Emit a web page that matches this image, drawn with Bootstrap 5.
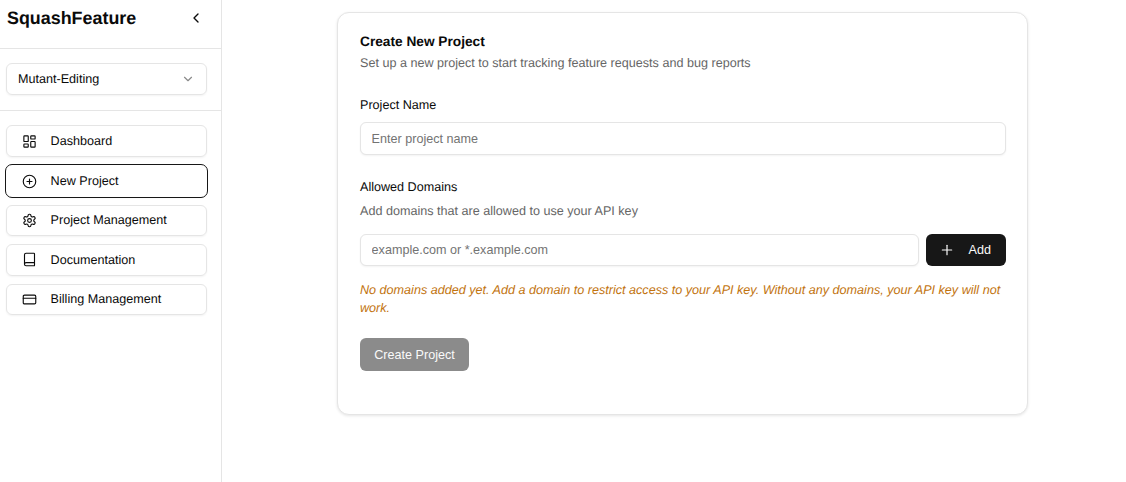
<!DOCTYPE html>
<html lang="en">

<head>
    <meta charset="UTF-8">
    <title>SquashFeature - New Project</title>
    <link href="https://cdn.jsdelivr.net/npm/bootstrap@5.3.3/dist/css/bootstrap.min.css" rel="stylesheet">
    <style>
        body { font-family: "Liberation Sans", Arial, sans-serif; font-size: 12.6px; color: #0a0a0a; background: #fff; height: 482px; overflow: hidden; text-rendering: geometricPrecision; }
        .sf-sidebar { width: 222px; height: 482px; border-right: 1px solid #e5e5e5; flex-shrink: 0; }
        .sf-head { height: 49px; padding: 0 7px 12px; border-bottom: 1px solid #e5e5e5; }
        .sf-brand { font-size: 17.9px; font-weight: 700; }
        .sf-back { width: 16px; height: 16px; margin-right: 10px; }
        .sf-switch { padding: 14px 6px 15px; border-bottom: 1px solid #e5e5e5; }
        .sf-select { height: 32px; width: 201px; padding: 0 11px; border: 1px solid #e5e5e5; border-radius: 6px; box-shadow: 0 1px 2px rgba(0,0,0,.05); }
        .sf-nav { padding: 14.4px 6px; gap: 8px; }
        .sf-item { height: 31.6px; width: 201px; padding-left: 15px; gap: 13.6px; border: 1px solid #e5e5e5; border-radius: 6px; box-shadow: 0 1px 2px rgba(0,0,0,.05); color: #0a0a0a; text-decoration: none; }
        .sf-item.is-active { border-color: #fff; outline: 1px solid #171717; padding-top: 1px; }
        .sf-item svg { width: 15px; height: 15px; flex-shrink: 0; }
        .sf-main { padding-top: 12px; padding-left: 115px; }
        .sf-panel { width: 691px; height: 403px; padding: 21px 21px 20px 22px; border: 1px solid #e5e5e5; border-radius: 12px; box-shadow: 0 1px 3px rgba(0,0,0,.1); }
        .sf-title { font-size: 13.7px; font-weight: 700; line-height: 16px; margin: 0 0 5px; }
        .sf-muted { color: #666; line-height: 16px; margin: 0; }
        .sf-label { line-height: 16px; margin: 26px 0 0; display: block; }
        .sf-label-second { margin-top: 24px; }
        .sf-input { height: 33px; font-size: 12.6px; padding: 0 10.6px; border: 1px solid #e5e5e5; border-radius: 6px; color: #0a0a0a; box-shadow: 0 1px 2px rgba(0,0,0,.05); font-family: inherit; }
        .sf-input::placeholder { color: #737373; opacity: 1; }
        .sf-gap-name { margin-top: 9px; }
        .sf-gap-row { margin-top: 15px; gap: 7px; }
        .sf-gap-row .sf-input { height: 32px; }
        .sf-add { width: 80px; height: 32px; padding: 0 15px 0 13px; font-size: 12.6px; background: #171717; border: 0; border-radius: 6px; color: #fafafa; flex-shrink: 0; }
        .sf-add svg { width: 16px; height: 16px; }
        .sf-warn { font-style: italic; color: #c2740f; line-height: 18px; margin: 15px 0 0; }
        .sf-create { width: 109px; height: 33px; padding: 1px 0 0; font-size: 12.6px; background: #8b8b8b; border: 0; border-radius: 6px; color: #fafafa; margin-top: 21px; }
    </style>
</head>

<body>

    <div class="d-flex">
        <!-- Sidebar -->
        <aside class="sf-sidebar">
            <div class="sf-head d-flex align-items-center justify-content-between">
                <span class="sf-brand">SquashFeature</span>
                <svg class="sf-back" viewBox="0 0 24 24" fill="none" stroke="#0a0a0a" stroke-width="2" stroke-linecap="round" stroke-linejoin="round"><path d="m15 18-6-6 6-6"/></svg>
            </div>
            <div class="sf-switch">
                <div class="sf-select d-flex align-items-center justify-content-between">
                    <span>Mutant-Editing</span>
                    <svg width="14" height="14" viewBox="0 0 24 24" fill="none" stroke="#8a8a8a" stroke-width="2" stroke-linecap="round" stroke-linejoin="round"><path d="m6 9 6 6 6-6"/></svg>
                </div>
            </div>
            <nav class="sf-nav d-flex flex-column">
                <a class="sf-item d-flex align-items-center" href="#">
                    <svg viewBox="0 0 24 24" fill="none" stroke="currentColor" stroke-width="1.8" stroke-linecap="round" stroke-linejoin="round"><rect width="7" height="9" x="3" y="3" rx="1"/><rect width="7" height="5" x="14" y="3" rx="1"/><rect width="7" height="9" x="14" y="12" rx="1"/><rect width="7" height="5" x="3" y="16" rx="1"/></svg>
                    Dashboard
                </a>
                <a class="sf-item is-active d-flex align-items-center" href="#">
                    <svg viewBox="0 0 24 24" fill="none" stroke="currentColor" stroke-width="1.8" stroke-linecap="round" stroke-linejoin="round"><circle cx="12" cy="12" r="10"/><path d="M8 12h8"/><path d="M12 8v8"/></svg>
                    New Project
                </a>
                <a class="sf-item d-flex align-items-center" href="#">
                    <svg viewBox="0 0 24 24" fill="none" stroke="currentColor" stroke-width="1.8" stroke-linecap="round" stroke-linejoin="round"><path d="M12.22 2h-.44a2 2 0 0 0-2 2v.18a2 2 0 0 1-1 1.73l-.43.25a2 2 0 0 1-2 0l-.15-.08a2 2 0 0 0-2.73.73l-.22.38a2 2 0 0 0 .73 2.73l.15.1a2 2 0 0 1 1 1.72v.51a2 2 0 0 1-1 1.74l-.15.09a2 2 0 0 0-.73 2.73l.22.38a2 2 0 0 0 2.73.73l.15-.08a2 2 0 0 1 2 0l.43.25a2 2 0 0 1 1 1.73V20a2 2 0 0 0 2 2h.44a2 2 0 0 0 2-2v-.18a2 2 0 0 1 1-1.73l.43-.25a2 2 0 0 1 2 0l.15.08a2 2 0 0 0 2.73-.73l.22-.39a2 2 0 0 0-.73-2.73l-.15-.08a2 2 0 0 1-1-1.74v-.5a2 2 0 0 1 1-1.74l.15-.09a2 2 0 0 0 .73-2.73l-.22-.38a2 2 0 0 0-2.73-.73l-.15.08a2 2 0 0 1-2 0l-.43-.25a2 2 0 0 1-1-1.73V4a2 2 0 0 0-2-2z"/><circle cx="12" cy="12" r="3"/></svg>
                    Project Management
                </a>
                <a class="sf-item d-flex align-items-center" href="#">
                    <svg viewBox="0 0 24 24" fill="none" stroke="currentColor" stroke-width="1.8" stroke-linecap="round" stroke-linejoin="round"><path d="M4 19.5v-15A2.5 2.5 0 0 1 6.500 2H19a1 1 0 0 1 1 1v18a1 1 0 0 1-1 1H6.500a1 1 0 0 1 0-5H20"/></svg>
                    Documentation
                </a>
                <a class="sf-item d-flex align-items-center" href="#">
                    <svg viewBox="0 0 24 24" fill="none" stroke="currentColor" stroke-width="1.8" stroke-linecap="round" stroke-linejoin="round"><rect width="20" height="14" x="2" y="5" rx="2"/><line x1="2" x2="22" y1="10" y2="10"/></svg>
                    Billing Management
                </a>
            </nav>
        </aside>

        <!-- Main -->
        <main class="sf-main flex-grow-1">
            <div class="sf-panel bg-white">
                <h1 class="sf-title">Create New Project</h1>
                <p class="sf-muted">Set up a new project to start tracking feature requests and bug reports</p>

                <label class="sf-label" for="projectName">Project Name</label>
                <input id="projectName" type="text" class="form-control sf-input sf-gap-name" placeholder="Enter project name">

                <label class="sf-label sf-label-second" for="domainInput">Allowed Domains</label>
                <p class="sf-muted mt-2">Add domains that are allowed to use your API key</p>
                <div class="d-flex sf-gap-row">
                    <input id="domainInput" type="text" class="form-control sf-input" placeholder="example.com or *.example.com">
                    <button type="button" class="btn sf-add d-flex align-items-center justify-content-between">
                        <svg viewBox="0 0 24 24" fill="none" stroke="currentColor" stroke-width="1.8" stroke-linecap="round" stroke-linejoin="round"><path d="M5 12h14"/><path d="M12 5v14"/></svg>
                        Add
                    </button>
                </div>
                <p class="sf-warn">No domains added yet. Add a domain to restrict access to your API key. Without any domains, your API key will not work.</p>
                <button type="button" class="btn sf-create">Create Project</button>
            </div>
        </main>
    </div>

    <script src="https://cdn.jsdelivr.net/npm/bootstrap@5.3.3/dist/js/bootstrap.bundle.min.js"></script>
</body>

</html>
